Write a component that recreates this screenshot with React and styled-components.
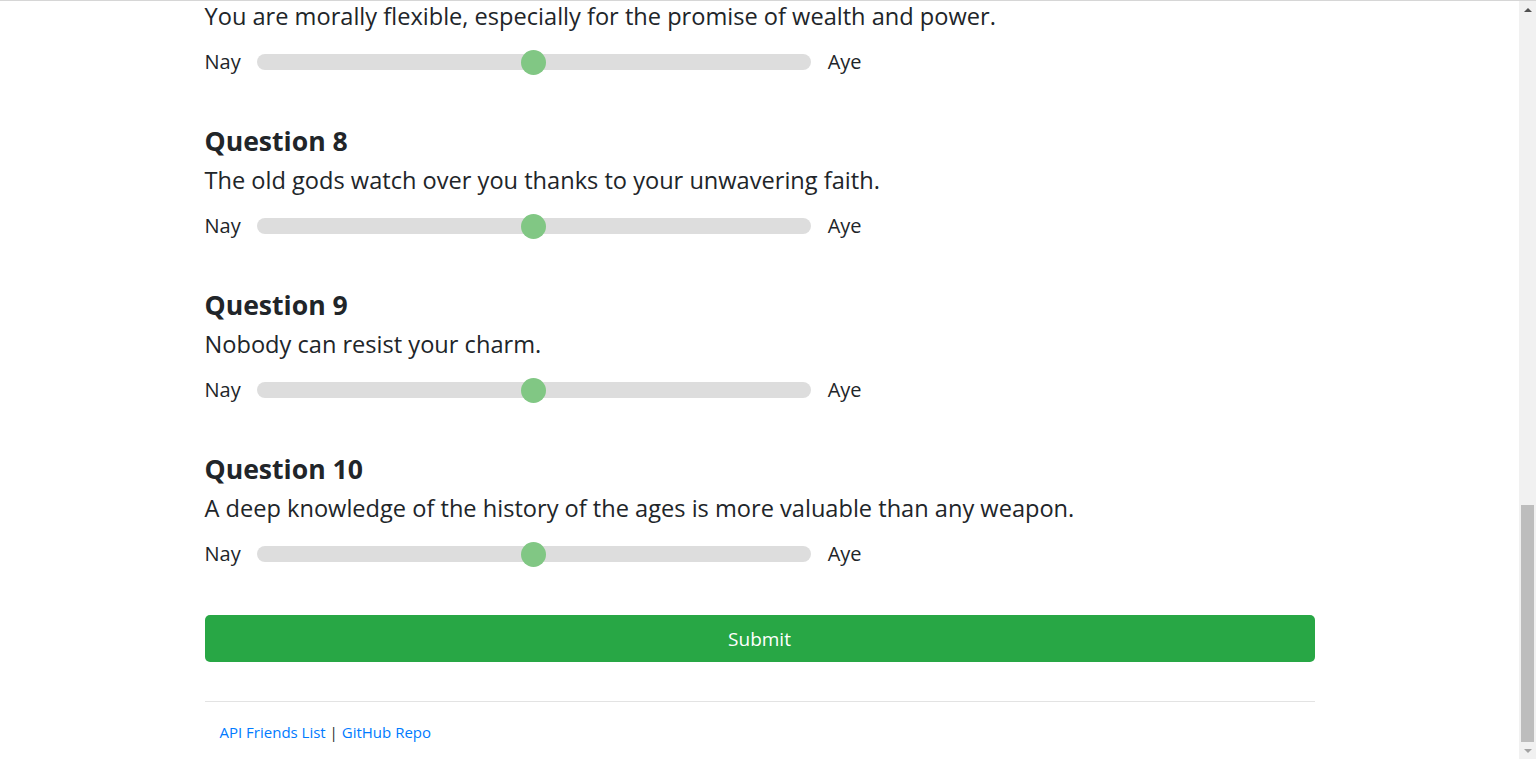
import React from "react";
import styled, { createGlobalStyle } from "styled-components";

const questions = [
  { n: 7, text: "You are morally flexible, especially for the promise of wealth and power." },
  { n: 8, text: "The old gods watch over you thanks to your unwavering faith." },
  { n: 9, text: "Nobody can resist your charm." },
  { n: 10, text: "A deep knowledge of the history of the ages is more valuable than any weapon." },
];

export default function App() {
  return (
    <>
      <GlobalStyle />
      <Viewport>
        <Main>
          <Container>
            {questions.map((q) => (
              <Question key={q.n}>
                <Heading>Question {q.n}</Heading>
                <Prompt>{q.text}</Prompt>
                <SliderRow>
                  <Label>Nay</Label>
                  <Range type="range" min="1" max="5" defaultValue="3" />
                  <Label>Aye</Label>
                </SliderRow>
              </Question>
            ))}
            <SubmitButton type="button">Submit</SubmitButton>
            <Rule />
            <Footer>
              <Link href="#">API Friends List</Link> | <Link href="#">GitHub Repo</Link>
            </Footer>
          </Container>
        </Main>
        <Scrollbar>
          <Arrow $dir="up" />
          <Track>
            <Thumb />
          </Track>
          <Arrow $dir="down" />
        </Scrollbar>
      </Viewport>
    </>
  );
}

const GlobalStyle = createGlobalStyle`
  html, body {
    margin: 0;
    padding: 0;
    overflow: hidden;
    background: #fff;
  }
  body {
    font-family: "Open Sans", "Noto Sans", sans-serif;
    color: #212529;
  }
`;

const Viewport = styled.div`
  height: 759px;
  box-sizing: border-box;
  border-top: 1px solid #d6d6d6;
  display: flex;
`;

const Main = styled.main`
  flex: 1;
  overflow: hidden;
  display: flex;
  flex-direction: column;
  justify-content: flex-end;
`;

const Container = styled.div`
  width: 1110px;
  margin: 0 auto;
  display: flex;
  flex-direction: column;
`;

const Question = styled.section`
  margin-bottom: 46px;
`;

const Heading = styled.h3`
  margin: 0;
  padding-top: 1px;
  font-size: 26.6px;
  line-height: 34px;
  font-weight: 700;
`;

const Prompt = styled.h4`
  margin: 7px 0 0;
  font-size: 23.6px;
  line-height: 30px;
  font-weight: 400;
`;

const SliderRow = styled.div`
  margin-top: 16px;
  height: 30px;
  display: flex;
  align-items: center;
  gap: 16px;
`;

const Label = styled.span`
  font-size: 20px;
  line-height: 30px;
`;

const Range = styled.input`
  -webkit-appearance: none;
  appearance: none;
  width: 554px;
  height: 16px;
  margin: 0 1px 0 0;
  border-radius: 8px;
  background: #dddddd;
  outline: none;

  &::-webkit-slider-thumb {
    -webkit-appearance: none;
    appearance: none;
    width: 25px;
    height: 25px;
    border-radius: 50%;
    background: #81c784;
    border: none;
    cursor: pointer;
  }
`;

const SubmitButton = styled.button`
  height: 47px;
  border: none;
  border-radius: 5px;
  background: #28a745;
  color: #fff;
  font-family: "Open Sans", "Noto Sans", sans-serif;
  font-size: 19px;
  cursor: pointer;
`;

const Rule = styled.hr`
  margin: 39px 0 0;
  border: none;
  border-top: 1px solid #e3e3e3;
`;

const Footer = styled.footer`
  padding: 18px 15px 15px;
  font-size: 15px;
  line-height: 24px;
`;

const Link = styled.a`
  color: #007bff;
  text-decoration: none;
`;

const Scrollbar = styled.aside`
  width: 17px;
  background: #f1f1f1;
  display: flex;
  flex-direction: column;
`;

const Arrow = styled.div`
  height: 17px;
  display: flex;
  align-items: center;
  justify-content: center;

  &::before {
    content: "";
    width: 0;
    height: 0;
    border-left: 4px solid transparent;
    border-right: 4px solid transparent;
    ${(p) =>
      p.$dir === "up"
        ? "border-bottom: 4px solid #505050;"
        : "border-top: 4px solid #a3a3a3;"}
  }
`;

const Track = styled.div`
  flex: 1;
  display: flex;
  flex-direction: column;
  justify-content: flex-end;
  padding: 0 2px;
`;

const Thumb = styled.div`
  height: 237px;
  background: #bdbdbd;
`;
